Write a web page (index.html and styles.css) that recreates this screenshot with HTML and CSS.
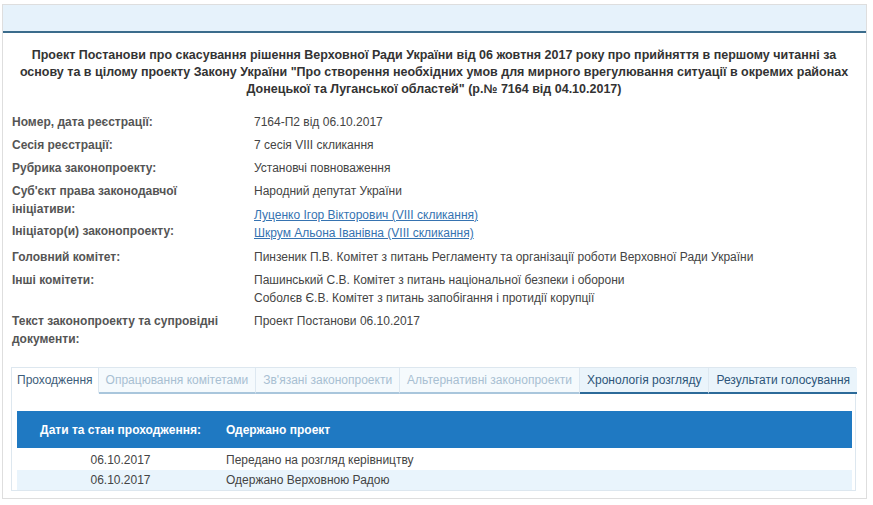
FILE: index.html
```html
<!DOCTYPE html>
<html lang="uk">
<head>
<meta charset="utf-8">
<title>Проект Постанови 7164-П2</title>
<link rel="stylesheet" href="styles.css">
</head>
<body>
<div class="box">
  <div class="band"></div>
  <div class="content">
    <h1 class="title">Проект Постанови про скасування рішення Верховної Ради України від 06 жовтня 2017 року про прийняття в першому читанні за основу та в цілому проекту Закону України "Про створення необхідних умов для мирного врегулювання ситуації в окремих районах Донецької та Луганської областей" (р.№ 7164 від 04.10.2017)</h1>

    <div class="info">
      <div class="row">
        <div class="label">Номер, дата реєстрації:</div>
        <div class="value">7164-П2 від 06.10.2017</div>
      </div>
      <div class="row">
        <div class="label">Сесія реєстрації:</div>
        <div class="value">7 сесія VIII скликання</div>
      </div>
      <div class="row">
        <div class="label">Рубрика законопроекту:</div>
        <div class="value">Установчі повноваження</div>
      </div>
      <div class="row row-group">
        <div class="label">
          <div>Суб'єкт права законодавчої ініціативи:</div>
          <div class="label-next">Ініціатор(и) законопроекту:</div>
        </div>
        <div class="value">
          <div>Народний депутат України</div>
          <div class="value-next">
            <a href="#">Луценко Ігор Вікторович (VIII скликання)</a><br>
            <a href="#">Шкрум Альона Іванівна (VIII скликання)</a>
          </div>
        </div>
      </div>
      <div class="row">
        <div class="label">Головний комітет:</div>
        <div class="value">Пинзеник П.В. Комітет з питань Регламенту та організації роботи Верховної Ради України</div>
      </div>
      <div class="row">
        <div class="label">Інші комітети:</div>
        <div class="value">Пашинський С.В. Комітет з питань національної безпеки і оборони<br>Соболєв Є.В. Комітет з питань запобігання і протидії корупції</div>
      </div>
      <div class="row">
        <div class="label">Текст законопроекту та супровідні документи:</div>
        <div class="value">Проект Постанови 06.10.2017</div>
      </div>
    </div>

    <div class="tabs">
      <ul class="tab-list">
        <li class="tab tab-first">Проходження</li>
        <li class="tab tab-off">Опрацювання комітетами</li>
        <li class="tab tab-off">Зв'язані законопроекти</li>
        <li class="tab tab-off">Альтернативні законопроекти</li>
        <li class="tab tab-on">Хронологія розгляду</li>
        <li class="tab tab-on">Результати голосування</li>
      </ul>
      <div class="panel">
        <div class="thead">
          <div class="c1">Дати та стан проходження:</div>
          <div class="c2">Одержано проект</div>
        </div>
        <div class="trow">
          <div class="c1">06.10.2017</div>
          <div class="c2">Передано на розгляд керівництву</div>
        </div>
        <div class="trow alt">
          <div class="c1">06.10.2017</div>
          <div class="c2">Одержано Верховною Радою</div>
        </div>
      </div>
    </div>
  </div>
</div>
</body>
</html>
```

FILE: styles.css
```css
* { box-sizing: border-box; }

html, body {
  margin: 0;
  padding: 0;
  background: #ffffff;
}

body {
  font-family: "Liberation Sans", Arial, sans-serif;
  font-size: 12px;
  color: #444444;
  padding: 4px 6px 0 2px;
}

.box {
  border: 1px solid #dedede;
  height: 495px;
}

.band {
  height: 28px;
  background: #e6f2fb;
  border-bottom: 2px solid #3b6c8c;
}

.content {
  padding: 0 10px 0 9px;
}

.title {
  margin: 14px 0 0;
  padding: 0;
  font-size: 12.5px;
  font-weight: bold;
  line-height: 17px;
  text-align: center;
  color: #333333;
}

.info {
  margin-top: 15px;
  display: flex;
  flex-direction: column;
  gap: 5px;
}

.row {
  display: flex;
  line-height: 18px;
}

.row-group { padding-bottom: 1px; }

.label {
  width: 242px;
  flex: none;
  font-weight: bold;
  color: #555555;
  padding-right: 20px;
}

.label-next { margin-top: 4px; }

.value {
  flex: 1;
  color: #444444;
}

.value-next { margin-top: 6px; }

.value a {
  color: #3673b1;
  text-decoration: underline;
}

.tabs {
  margin-top: 19px;
  margin-left: -1px;
  border: 1px solid #dde7ef;
}

.tab-list {
  list-style: none;
  margin: 0;
  padding: 0;
  display: flex;
  height: 26px;
}

.tab {
  padding: 0 7px;
  line-height: 24px;
  border-right: 1px solid #dde8f1;
  border-bottom: 2px solid #a9c6dc;
  white-space: nowrap;
  background: #f5fafd;
  font-size: 12px;
}

.tab-first {
  padding: 0 5px;
  color: #3d5d7a;
  background: #ffffff;
  border-bottom-color: #ffffff;
}

.tab-off {
  color: #a8bfd2;
}

.tab-on {
  color: #2d5479;
  background: #eaf4fb;
  border-bottom-color: #2c6a99;
}

.tab:last-child { border-right: none; }

.panel {
  padding: 17px 3px 0 5px;
}

.thead {
  display: flex;
  align-items: center;
  height: 37px;
  background: #1f79c2;
  color: #ffffff;
  font-weight: bold;
  margin-bottom: 2px;
}

.trow {
  display: flex;
  align-items: center;
  height: 20px;
  color: #444444;
}

.trow.alt { background: #e9f4fc; }

.c1 {
  width: 207px;
  flex: none;
  text-align: center;
}

.c2 {
  padding-left: 2px;
}
```
